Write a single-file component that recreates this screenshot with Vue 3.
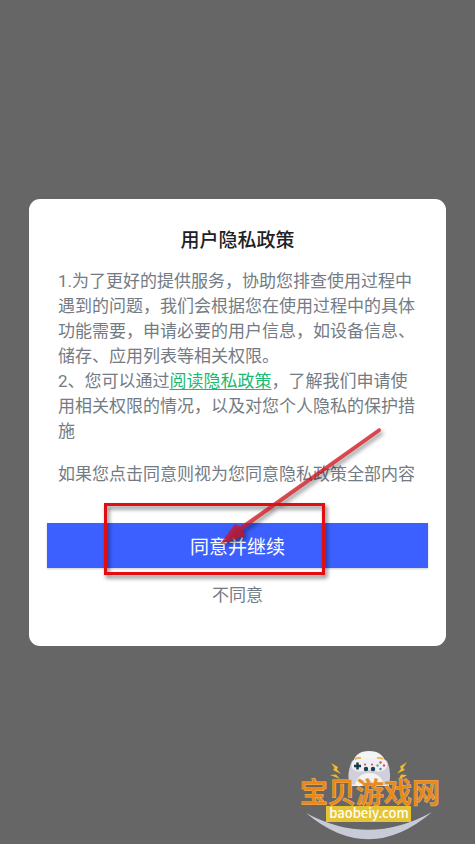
<script setup>
const title = '用户隐私政策'
const agree = '同意并继续'
const decline = '不同意'
</script>

<template>
  <main class="backdrop">
    <section class="dialog" role="dialog" aria-labelledby="dialog-title">
      <h1 id="dialog-title" class="title">{{ title }}</h1>
      <div class="content">
        <p>1.为了更好的提供服务，协助您排查使用过程中遇到的问题，我们会根据您在使用过程中的具体功能需要，申请必要的用户信息，如设备信息、储存、应用列表等相关权限。</p>
        <p>2、您可以通过<a href="#privacy">阅读隐私政策</a>，了解我们申请使用相关权限的情况，以及对您个人隐私的保护措施</p>
        <p class="notice">如果您点击同意则视为您同意隐私政策全部内容</p>
      </div>
      <div class="actions">
        <button type="button" class="agree">{{ agree }}</button>
        <button type="button" class="decline">{{ decline }}</button>
        <svg class="marker" width="300" height="170" viewBox="0 0 300 170" aria-hidden="true">
          <rect x="14.5" y="82.5" width="218" height="69" fill="none" stroke="#e30c10" stroke-width="3" />
          <path d="M288 6 Q291 7 289.500 9.500 L152 107.500 L154 114 L129 122 L144 102 L149 104.500 Z" fill="#d5131d" fill-opacity="0.76" />
        </svg>
      </div>
    </section>

    <svg class="logo" width="150" height="96" viewBox="0 0 150 96" role="img" aria-label="宝贝游戏网 baobeiy.com">
      <path d="M11 65 Q74 99 137 64 Q74 118 11 65 Z" fill="#c9cad8" />
      <path d="M57 20 Q58 3 74 3 Q90 3 92 20 L94 38 L56 38 Z" fill="#f4f5f3" />
      <path d="M57 13 Q63 8 68 12 L80 12 Q86 8 92 13 Q97 24 94 36 L89 37 Q86 25 74 25 Q63 25 60 37 L55 36 Q51 27 57 13 Z" fill="#cfd0dc" />
      <path d="M59 12 Q74 8 90 12 Q95 18 89 22 Q84 25 79 22 L70 22 Q65 25 59 22 Q54 18 59 12 Z" fill="#f0f0f3" />
      <path d="M60 11 Q62 9 66 10 M82 10 Q86 9 88 11" fill="none" stroke="#e8af2c" stroke-width="1.500" />
      <path d="M59 18 H66 M62.500 14.500 V21.500" stroke="#16394b" stroke-width="2.500" />
      <circle cx="71" cy="21" r="2.200" fill="#174154" />
      <circle cx="78" cy="21" r="2.200" fill="#174154" />
      <circle cx="70" cy="16.500" r="1" fill="#c64059" />
      <circle cx="77" cy="16.500" r="1" fill="#c64059" />
      <circle cx="85.500" cy="14.500" r="1.200" fill="#db525b" />
      <circle cx="82.500" cy="17.500" r="1.200" fill="#55a8bd" />
      <circle cx="89" cy="17.500" r="1.200" fill="#db525b" />
      <circle cx="85.500" cy="21" r="1.200" fill="#4e899a" />
      <path d="M36 15 L43 19 L42 21.500 L46 26 L38 22 L39.500 20 Z M35 27 L41 26.500 L45 31 L39 28.500 Z M112 14 L105 18.500 L106 21 L102 25.500 L110 22 L108 20 Z M112 27 L106 26.500 L104 31 L109 29 Z" fill="#f3bb2c" />
      <text class="brand" x="5" y="55">宝贝游戏网</text>
      <rect x="31" y="58" width="85" height="16" fill="#e5c536" />
      <text class="domain" x="74" y="70" text-anchor="middle">baobeiy.com</text>
    </svg>
  </main>
</template>

<style>
body {
  margin: 0;
  background: #666;
}
</style>

<style scoped>
.backdrop {
  position: relative;
  box-sizing: border-box;
  min-height: 100vh;
  padding: 24px 29px;
  display: flex;
  align-items: center;
  justify-content: center;
  background: #666;
  font-family: Roboto, "Noto Sans CJK SC", sans-serif;
}

.dialog {
  box-sizing: border-box;
  width: 100%;
  max-width: 480px;
  padding: 28px 18px 34px;
  border-radius: 11px;
  background: #fff;
}

.title {
  margin: 0;
  font-size: 19px;
  line-height: 28px;
  font-weight: 500;
  text-align: center;
  color: #202124;
}

.content {
  padding: 14px 11px 0;
  font-size: 17px;
  line-height: 25px;
  color: #737b84;
}

.content p {
  margin: 0;
}

.content .notice {
  margin-top: 18px;
}

.content a {
  color: #20b870;
  text-underline-offset: 2px;
}

.actions {
  position: relative;
  display: flex;
  flex-direction: column;
  margin-top: 36px;
}

button {
  border: 0;
  padding: 0;
  font-family: inherit;
  cursor: pointer;
}

.agree {
  height: 45px;
  background: #3b60ff;
  box-shadow: 0 1px 2px #0003;
  color: #fff;
  font-size: 19px;
}

.decline {
  align-self: center;
  height: 36px;
  margin-top: 8px;
  background: transparent;
  color: #737b84;
  font-size: 17px;
}

.marker {
  position: absolute;
  left: 44px;
  top: -101px;
  overflow: visible;
  pointer-events: none;
  filter: drop-shadow(2px 3px 2px #0008);
}

.logo {
  position: absolute;
  right: 30px;
  bottom: 0;
}

.brand {
  font-family: "Noto Sans CJK SC", sans-serif;
  font-size: 28px;
  font-weight: 500;
  fill: #e98916;
  stroke: #e9b67a;
  stroke-width: 1px;
  paint-order: stroke;
}

.domain {
  font-family: "Noto Sans CJK SC", sans-serif;
  font-size: 13px;
  font-weight: 500;
  fill: #fffdf2;
}
</style>
